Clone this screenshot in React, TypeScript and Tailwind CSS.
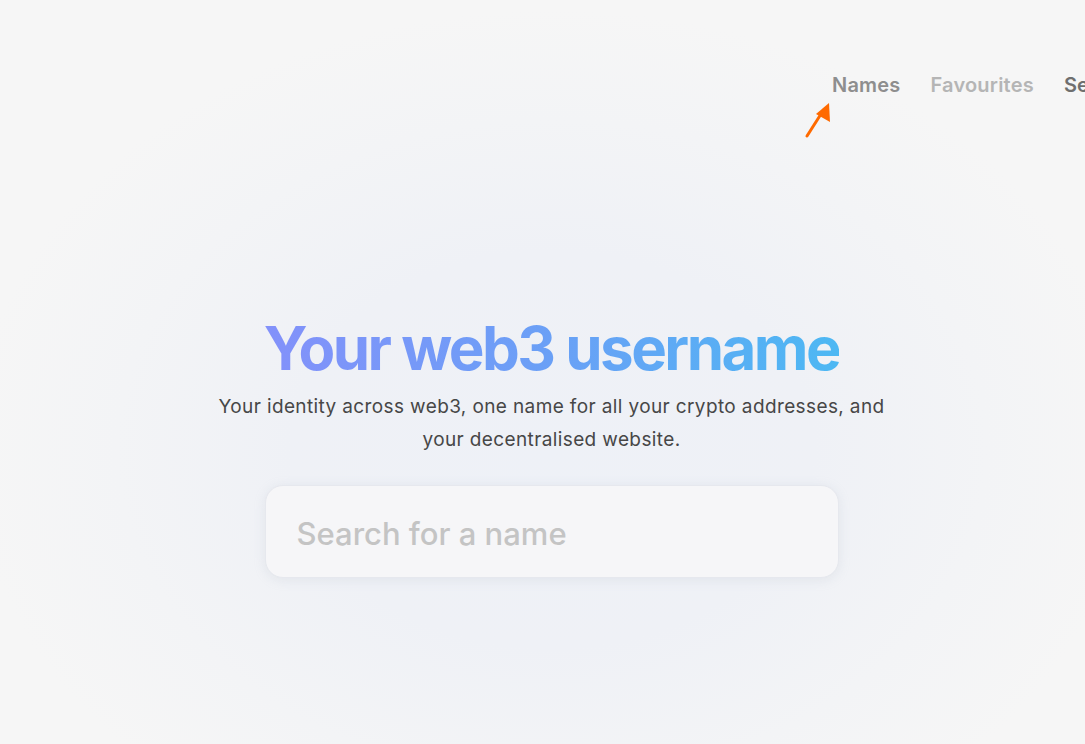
import React from "react";

export default function App() {
  return (
    <div
      className="relative w-[1085px] h-[744px] overflow-hidden"
      style={{
        fontFamily: "Inter, 'Noto Sans', sans-serif",
        background:
          "radial-gradient(ellipse 580px 440px at 552px 450px, #eef1f7 0%, #eff1f6 45%, #f3f4f6 75%, #f6f6f6 100%)",
      }}
    >
      <nav className="flex pt-[71px] pl-[832px] overflow-hidden whitespace-nowrap">
        <div className="flex gap-[30px] text-[20px] font-semibold leading-[28px] tracking-[0.01em]">
          <a className="text-[#8e8e8e]">Names</a>
          <a className="text-[#b5b5b5]">Favourites</a>
          <a className="text-[#6f6f6f]">Settings</a>
        </div>
      </nav>
      <svg
        className="absolute left-[804px] top-[100px]"
        width="30"
        height="40"
        viewBox="0 0 30 40"
      >
        <line x1="3" y1="36" x2="17" y2="14" stroke="#ff6a00" strokeWidth="3" strokeLinecap="round" />
        <polygon points="25,3 26,22 12,14" fill="#ff6a00" />
      </svg>

      <main className="flex flex-col items-center pt-[213px] pl-[18px]">
        <h1
          className="text-[60px] font-bold leading-[72px] tracking-[-0.042em] bg-clip-text text-transparent"
          style={{ backgroundImage: "linear-gradient(90deg, #8391fa 0%, #6aa0f6 50%, #4db8f3 100%)" }}
        >
          Your web3 username
        </h1>
        <p className="mt-[6px] max-w-[690px] text-center text-[19px] leading-[33px] tracking-[0.02em] text-[#474747]">
          Your identity across web3, one name for all your crypto addresses, and your decentralised website.
        </p>
        <div className="mt-[29px] w-[574px] h-[93px] rounded-[18px] border border-[#e6e8ee] bg-[#f6f6f8] shadow-[0_2px_12px_rgba(160,170,190,0.18)] flex items-center px-[31px] pt-[5px]">
          <span className="text-[31px] font-medium text-[#c4c4c4]">Search for a name</span>
        </div>
      </main>
    </div>
  );
}
